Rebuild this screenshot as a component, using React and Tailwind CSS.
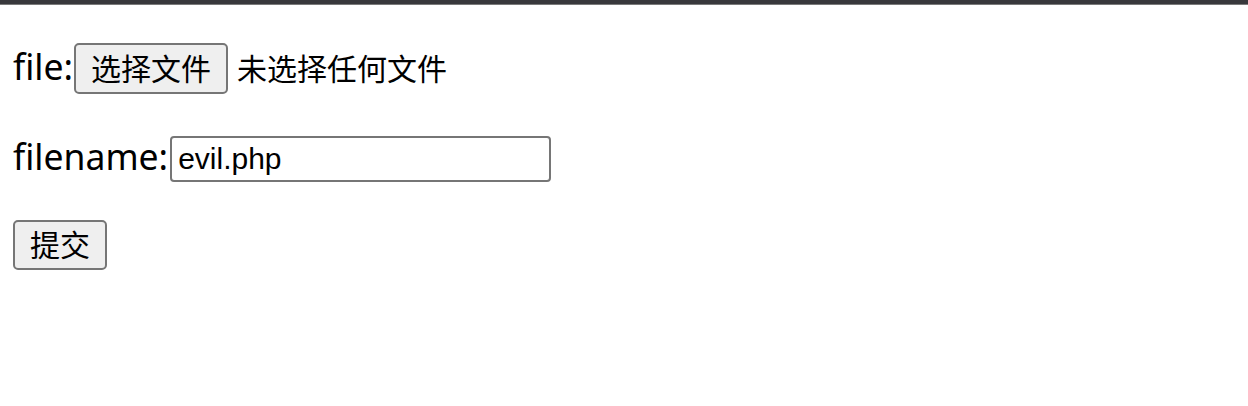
import React from 'react'

const cjk = "font-['Noto_Sans','Noto_Sans_CJK_SC',sans-serif]"

const App = () => {
  return (
    <div className="min-h-screen bg-white text-black">
      <div className="h-[4px] bg-[#38383c] border-b border-[#7a7a7a] box-content" />

      <form className={`px-[13px] ${cjk}`} onSubmit={e => e.preventDefault()}>
        {/* file row */}
        <div className="mt-[38px] flex items-center h-[51px]">
          <span className="text-[35.5px] leading-none pb-[4px]">file:</span>
          <button
            type="button"
            className="ml-[1px] h-[51px] w-[154px] border-2 border-[#767676] rounded-[5px] bg-[#efefef] text-[30px] leading-none flex items-center justify-center"
          >
            选择文件
          </button>
          <span className="ml-[9px] text-[30px] leading-none">未选择任何文件</span>
        </div>

        {/* filename row */}
        <div className="mt-[42px] flex items-center h-[46px]">
          <span className="text-[35.5px] leading-none pb-[4px]">filename:</span>
          <input
            type="text"
            defaultValue="evil.php"
            className="ml-[2px] h-[46px] w-[381px] border-2 border-[#767676] rounded-[4px] px-[6px] text-[30px] font-['Liberation_Sans',Arial,sans-serif] outline-none"
          />
        </div>

        {/* submit */}
        <div className="mt-[38px]">
          <button
            type="submit"
            className="h-[50px] w-[94px] border-2 border-[#767676] rounded-[5px] bg-[#efefef] text-[30px] leading-none flex items-center justify-center"
          >
            提交
          </button>
        </div>
      </form>
    </div>
  )
}

export default App
